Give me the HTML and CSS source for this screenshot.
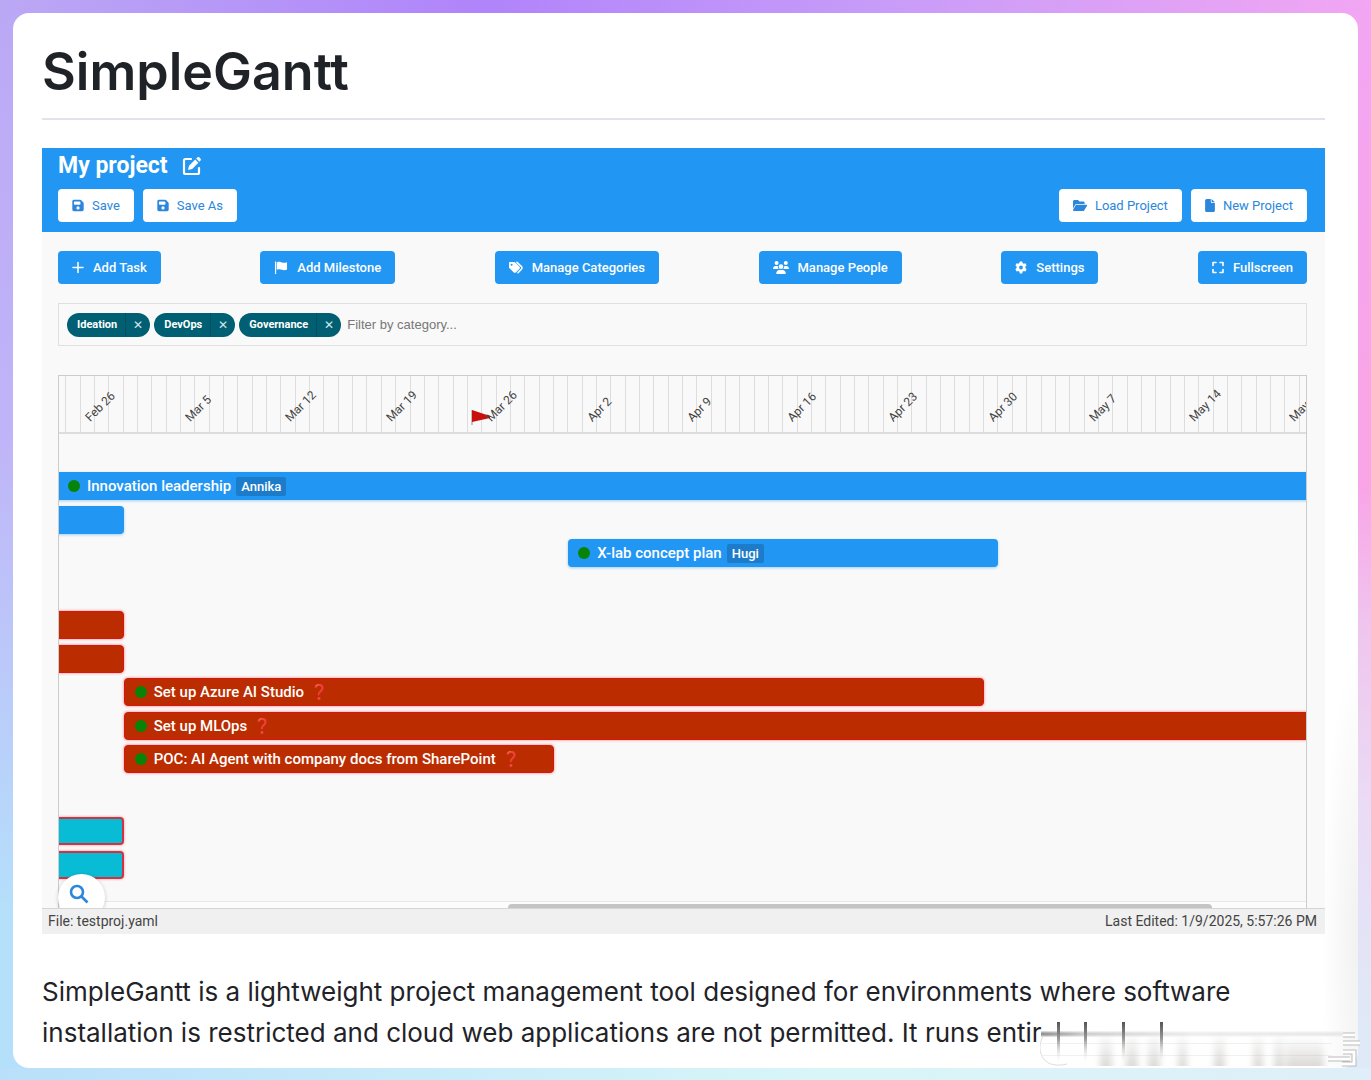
FILE: index.html
```html
<!DOCTYPE html>
<html lang="en">
<head>
<meta charset="utf-8">
<meta name="viewport" content="width=device-width, initial-scale=1">
<title>SimpleGantt</title>
<link rel="stylesheet" href="styles.css">
</head>
<body>
<main class="card">
  <h1 class="page-title">SimpleGantt</h1>

  <section class="app">
    <header class="app-header">
      <div class="project-name">
        <h2>My project</h2>
        <button class="icon-button" type="button" aria-label="Rename project">
          <svg viewBox="0 0 20 20" width="20" height="20" fill="none"><path d="M9 3H3.5A1.5 1.5 0 0 0 2 4.500v12A1.500 1.500 0 0 0 3.500 18h12a1.500 1.500 0 0 0 1.500-1.500V12" stroke="currentColor" stroke-width="2.200" stroke-linecap="round"/><path d="M6 14l1-4.200 6.200-6.200 3.200 3.200-6.200 6.200zM14.200 2.600l1-1a1.700 1.700 0 0 1 2.400 0l.8.8a1.700 1.700 0 0 1 0 2.400l-1 1z" fill="currentColor"/></svg>
        </button>
      </div>
      <div class="file-actions">
        <button class="button light" type="button"><svg viewBox="0 0 448 512" class="icon"><path d="M64 32C29 32 0 61 0 96v320c0 35 29 64 64 64h320c35 0 64-29 64-64V173c0-17-7-33-19-45l-77-77c-12-12-28-19-45-19zm0 96c0-18 14-32 32-32h192c18 0 32 14 32 32v64c0 18-14 32-32 32H96c-18 0-32-14-32-32zm160 160a64 64 0 1 1 0 128 64 64 0 1 1 0-128z"/></svg>Save</button>
        <button class="button light" type="button"><svg viewBox="0 0 448 512" class="icon"><path d="M64 32C29 32 0 61 0 96v320c0 35 29 64 64 64h320c35 0 64-29 64-64V173c0-17-7-33-19-45l-77-77c-12-12-28-19-45-19zm0 96c0-18 14-32 32-32h192c18 0 32 14 32 32v64c0 18-14 32-32 32H96c-18 0-32-14-32-32zm160 160a64 64 0 1 1 0 128 64 64 0 1 1 0-128z"/></svg>Save As</button>
        <span class="spacer"></span>
        <button class="button light" type="button"><svg viewBox="0 0 576 512" class="icon wide"><path d="M89 224 0 376V96c0-35 29-64 64-64h118c17 0 33 7 45 19l26 26c12 12 28 19 45 19h118c35 0 64 29 64 64v32H144c-23 0-44 12-55 32zm27 16c6-10 17-16 28-16h400c12 0 22 6 28 16s6 22 0 32L460 464c-6 10-16 16-28 16H32c-12 0-22-6-28-16s-6-22 0-32z"/></svg>Load Project</button>
        <button class="button light" type="button"><svg viewBox="0 0 384 512" class="icon narrow"><path d="M0 64C0 29 29 0 64 0h160v128c0 18 14 32 32 32h128v288c0 35-29 64-64 64H64c-35 0-64-29-64-64zm384 64H256V0z"/></svg>New Project</button>
      </div>
    </header>

    <div class="app-body">
      <nav class="toolbar" aria-label="Project tools">
        <button class="button" type="button"><svg viewBox="0 0 12 12" class="icon"><path d="M6 1v10M1 6h10" stroke="currentColor" stroke-width="1.500" stroke-linecap="round"/></svg>Add Task</button>
        <button class="button" type="button"><svg viewBox="0 0 14 14" class="icon wide"><path d="M.5.5h1.300V14H.5zM2.500 1.500C5 .5 6.500 1 8 1.600s3.500.6 5.500-.3v7.900c-2 .9-4 .8-5.500.3s-3-1-5.500 0z"/></svg>Add Milestone</button>
        <button class="button" type="button"><svg viewBox="0 0 14 12" class="icon wide"><path d="M0 1.500v4c0 .5.200.9.500 1.200l4.300 4.200c.6.600 1.500.6 2.100 0l3.600-3.600c.6-.6.600-1.500 0-2.100L6.300 1C6 .7 5.600.5 5.200.5H1c-.6 0-1 .4-1 1zM2.600 2.200a1 1 0 1 1 0 2 1 1 0 0 1 0-2z" fill-rule="evenodd"/><path d="M8 .8l4.200 4c.9.900.9 2 .1 2.900l-3.300 3.500" fill="none" stroke="currentColor" stroke-width="1.600" stroke-linecap="round"/></svg>Manage Categories</button>
        <button class="button" type="button"><svg viewBox="0 0 640 512" class="icon extra"><path d="M144 0a80 80 0 1 1 0 160 80 80 0 0 1 0-160zm368 0a80 80 0 1 1 0 160 80 80 0 0 1 0-160zM0 299c0-59 48-107 107-107h43c16 0 31 3 45 10-6 34 7 86 39 118H21c-12 0-21-9-21-21zm405 21h1c32-32 45-84 39-118 14-7 29-10 45-10h43c59 0 107 48 107 107 0 12-9 21-21 21zM320 128a96 96 0 1 1 0 192 96 96 0 0 1 0-192zM128 485c0-73 60-133 133-133h118c73 0 133 60 133 133 0 15-12 27-27 27H155c-15 0-27-12-27-27z"/></svg>Manage People</button>
        <button class="button" type="button"><svg viewBox="0 0 12 12" class="icon"><path d="M4.800 0h2.400l.4 1.600 1.200.7 1.600-.5 1.200 2.100-1.200 1.200v1.500l1.200 1.200-1.200 2.200-1.600-.5-1.200.7L7.200 12H4.800l-.4-1.800-1.200-.7-1.600.5L.4 7.800l1.200-1.200V5.100L.4 3.900l1.200-2.100 1.600.5 1.200-.7zM6 4.100a1.900 1.900 0 1 0 0 3.800 1.900 1.900 0 0 0 0-3.800z" fill-rule="evenodd"/></svg>Settings</button>
        <button class="button" type="button"><svg viewBox="0 0 12 12" class="icon"><path d="M1 4V1h3M8 1h3v3M11 8v3H8M4 11H1V8" fill="none" stroke="currentColor" stroke-width="1.600" stroke-linecap="round" stroke-linejoin="round"/></svg>Fullscreen</button>
      </nav>

      <div class="filter">
        <span class="chip">Ideation<button type="button" aria-label="Remove Ideation">✕</button></span>
        <span class="chip">DevOps<button type="button" aria-label="Remove DevOps">✕</button></span>
        <span class="chip">Governance<button type="button" aria-label="Remove Governance">✕</button></span>
        <input type="text" placeholder="Filter by category..." aria-label="Filter by category">
      </div>

      <div class="chart">
        <div class="days track" id="days">
          <span class="week w1">Feb 26</span>
          <span class="week w2">Mar 5</span>
          <span class="week w3">Mar 12</span>
          <span class="week w4">Mar 19</span>
          <svg class="flag" viewBox="0 0 20 16" width="20" height="16"><path d="M1 1v15" stroke="#888"/><path d="M1 1l18 6v2L1 13z" fill="#c8100c"/></svg>
          <span class="week w5">Mar 26</span>
          <span class="week w6">Apr 2</span>
          <span class="week w7">Apr 9</span>
          <span class="week w8">Apr 16</span>
          <span class="week w9">Apr 23</span>
          <span class="week w10">Apr 30</span>
          <span class="week w11">May 7</span>
          <span class="week w12">May 14</span>
          <span class="week w13">May 21</span>
        </div>

        <div class="group three">
          <div class="track"><div class="bar blue full"><i class="dot"></i>Innovation leadership<span class="person">Annika</span></div></div>
          <div class="track"><div class="bar blue early"></div></div>
          <div class="track"><div class="bar blue xlab"><i class="dot"></i>X-lab concept plan<span class="person">Hugi</span></div></div>
        </div>
        <div class="group five">
          <div class="track"><div class="bar red early"></div></div>
          <div class="track"><div class="bar red early"></div></div>
          <div class="track"><div class="bar red azure"><i class="dot"></i>Set up Azure AI Studio<span class="unknown">❓</span></div></div>
          <div class="track"><div class="bar red mlops"><i class="dot"></i>Set up MLOps<span class="unknown">❓</span></div></div>
          <div class="track"><div class="bar red poc"><i class="dot"></i>POC: AI Agent with company docs from SharePoint<span class="unknown">❓</span></div></div>
        </div>
        <div class="group two">
          <div class="track"><div class="bar cyan early"></div></div>
          <div class="track"><div class="bar cyan early"></div></div>
        </div>
        <div class="scrollbar"><div class="thumb"></div></div>
      </div>
      <button class="zoom" type="button" aria-label="Zoom"><svg viewBox="0 0 20 20" width="20" height="20" fill="none" stroke="currentColor" stroke-width="2.600"><circle cx="8" cy="8" r="6"/><path d="M12.500 12.500L18.500 18.500"/></svg></button>
    </div>

    <footer class="status"><span>File: testproj.yaml</span><span>Last Edited: 1/9/2025, 5:57:26 PM</span></footer>
  </section>

  <p class="intro">SimpleGantt is a lightweight project management tool designed for environments where software<br>installation is restricted and cloud web applications are not permitted. It runs entir</p>

  <svg class="smear" viewBox="0 0 322 46" width="322" height="46" aria-hidden="true">
    <defs>
      <linearGradient id="fade" x1="0" y1="0" x2="0" y2="1"><stop offset="0" stop-color="#555"/><stop offset=".4" stop-color="#999"/><stop offset="1" stop-color="#fff" stop-opacity="0"/></linearGradient>
      <linearGradient id="rise" x1="0" y1="0" x2="0" y2="1"><stop offset="0" stop-color="#bbb" stop-opacity="0"/><stop offset="1" stop-color="#bbb5ae" stop-opacity=".5"/></linearGradient>
      <linearGradient id="line" x1="0" y1="0" x2="1" y2="0"><stop offset="0" stop-color="#888"/><stop offset=".15" stop-color="#ccc"/><stop offset=".5" stop-color="#ececec"/><stop offset="1" stop-color="#e6e6e6"/></linearGradient>
      <filter id="soft"><feGaussianBlur stdDeviation="3 0"/></filter>
      <filter id="softline"><feGaussianBlur stdDeviation="0 1"/></filter>
    </defs>
    <path d="M1 10h302v4H1z" fill="url(#line)" filter="url(#softline)"/>
    <path d="M2 21h290v1H2zM2 33h290v1H2z" fill="#f0f0f0"/>
    <g fill="url(#rise)" filter="url(#soft)"><path d="M60 14h12v30H60zM86 14h12v30H86zM108 14h12v30h-12zM138 10h9v34h-9zM174 10h11v34h-11zM213 14h10v30h-10zM234 14h10v30h-10z"/><path d="M246 14h38v30h-38z"/></g>
    <path d="M17 0h3v42h-3zM44 0h3v42h-3zM82 0h3v42h-3zM120 0h3v42h-3z" fill="url(#fade)"/>
    <path d="M3 14c-4 8-4 16 0 22 5 8 16 8 24 6" fill="none" stroke="#ddd"/>
    <g fill="none" stroke-linejoin="miter">
      <path d="M303 13h12M303 21h17M303 30h11v12h-12M288 37h22" stroke="#bbb" stroke-width="5"/>
      <path d="M303 13h12M303 21h17M303 30h11v12h-12M288 37h22" stroke="#fff" stroke-width="3"/>
    </g>
  </svg>
</main>
<script src="app.js"></script>
</body>
</html>
```
FILE: styles.css
```css
* { box-sizing: border-box; }

body {
  margin: 0;
  padding: 13px;
  min-height: 100vh;
  color: #1f2328;
  font-family: Inter, "Liberation Sans", sans-serif;
  background:
    linear-gradient(to right, #b9dffa, #d8f6f8 60%, #dfeef8) bottom / 100% 13px no-repeat,
    linear-gradient(to right, #bba8f5, #b084fa 35%, #c89cf8 65%, #f2a6f3) top / 100% 13px no-repeat,
    linear-gradient(to bottom, #f2a6f3 0, #f9a5e8 35%, #f9a5e8 45%, #efc5ee 58%, #eadcf6 75%, #dfe9f7 95%) right / 50% 100% no-repeat,
    linear-gradient(to bottom, #bba8f5, #c0b4f8 40%, #b5e0fb 85%);
}

button, input { font: inherit; border: 0; }
button { cursor: pointer; }

.card {
  position: relative;
  padding: 29px 33px 14px 29px;
  border-radius: 16px;
  background: radial-gradient(ellipse at 100% 70%, #f1f1f1, #fff 70%) right bottom / 36px 420px no-repeat, #fff;
}

.page-title {
  margin: 0 0 28px;
  padding-bottom: 17px;
  border-bottom: 2px solid #e0e3ea;
  font-size: 52px;
  line-height: 59px;
  font-weight: 600;
}

.app {
  color: #444;
  font-family: Roboto, "Liberation Sans", sans-serif;
}

.app-header {
  padding: 4px 18px 10px 16px;
  background: #2196f3;
  color: #fff;
}

.project-name { display: flex; align-items: center; gap: 14px; }
.project-name h2 { margin: 0; font-size: 23px; line-height: 28px; font-weight: 700; }

.icon-button {
  display: flex;
  padding: 0;
  background: none;
  color: inherit;
}

.file-actions { display: flex; gap: 9px; margin-top: 9px; }
.spacer { flex: 1; }

.button {
  display: flex;
  align-items: center;
  gap: 9px;
  height: 33px;
  padding: 0 14px;
  border-radius: 4px;
  background: #2196f3;
  color: #fff;
  font-size: 13px;
  font-weight: 500;
  white-space: nowrap;
}

.button.light { gap: 8px; background: #fff; color: #2b86dc; font-weight: 400; }

.icon { width: 12px; height: 13px; fill: currentColor; }
.icon.narrow { width: 10px; }
.icon.wide { width: 14px; }
.icon.extra { width: 16px; }

.app-body {
  position: relative;
  overflow: hidden;
  padding: 19px 18px 0 16px;
  background: #f9f9f9;
}

.toolbar { display: flex; justify-content: space-between; }

.filter {
  display: flex;
  align-items: center;
  gap: 4px;
  height: 43px;
  margin: 19px 0 29px;
  padding: 0 8px;
  border: 1px solid #e0e0e0;
}

.chip {
  display: flex;
  align-items: center;
  height: 24px;
  padding-left: 10px;
  border-radius: 12px;
  background: #005f73;
  color: #fff;
  font-size: 11px;
  font-weight: 700;
}

.chip button {
  width: 25px;
  height: 24px;
  margin-left: 8px;
  padding: 0;
  border-left: 1px solid #00505f;
  background: none;
  color: #d5e5e8;
  font-size: 12px;
  font-weight: 400;
}

.filter input {
  flex: 1;
  padding: 0 2px;
  background: none;
  font-family: "Liberation Sans", sans-serif;
  font-size: 13px;
}

.filter input::placeholder { color: #777; }

.chart {
  overflow: hidden;
  border: 1px solid #ccc;
  border-bottom: 0;
}

/* One column per day; the first and last days are cut by the chart frame. */
.track {
  display: grid;
  grid-template-columns: repeat(88, minmax(0, 1fr));
  margin: 0 -8px 0 -7px;
}

.days {
  height: 58px;
  margin-bottom: 38px;
  border-bottom: 2px solid #ddd;
}

.day { grid-row: 1; border-right: 1px solid #ddd; }

.week {
  z-index: 1;
  grid-row: 1;
  align-self: end;
  margin: 0 0 7px 12px;
  font-size: 12px;
  line-height: 16px;
  white-space: nowrap;
  transform: rotate(-45deg);
  transform-origin: left bottom;
}

.w1 { grid-column: 3 / span 7; }
.w2 { grid-column: 10 / span 7; }
.w3 { grid-column: 17 / span 7; }
.w4 { grid-column: 24 / span 7; }
.w5 { grid-column: 31 / span 7; }
.w6 { grid-column: 38 / span 7; }
.w7 { grid-column: 45 / span 7; }
.w8 { grid-column: 52 / span 7; }
.w9 { grid-column: 59 / span 7; }
.w10 { grid-column: 66 / span 7; }
.w11 { grid-column: 73 / span 7; }
.w12 { grid-column: 80 / span 7; }
.w13 { grid-column: 87 / span 2; }

.flag { grid-row: 1; grid-column: 30 / span 2; align-self: end; margin: 0 0 7px 3px; z-index: 1; }

.group { display: grid; align-content: space-between; margin-bottom: 44px; }
.three { min-height: 95px; }
.five { min-height: 162px; }
.two { min-height: 62px; margin-bottom: 22px; }

.bar {
  display: flex;
  align-items: center;
  height: 28px;
  padding-left: 10px;
  border-radius: 4px;
  color: #fff;
  font-size: 15px;
  font-weight: 500;
  white-space: nowrap;
}

.blue { background: #2196f3; box-shadow: 0 1px 3px #2196f366; }
.red { background: #bb2c00; border: 1px solid #d9150f; box-shadow: 0 0 3px #ff000088; }
.cyan { background: #09bcd6; border: 2px solid #cf3444; box-shadow: 0 0 3px #ff000066; }

.full { grid-column: 1 / 89; padding-left: 16px; }
.early { grid-column: 1 / 6; }
.xlab { grid-column: 37 / 67; }
.azure { grid-column: 6 / 66; }
.mlops { grid-column: 6 / 89; }
.poc { grid-column: 6 / 36; }

.dot { width: 12px; height: 12px; margin-right: 7px; border-radius: 50%; background: #078407; }

.person {
  margin-left: 5px;
  padding: 0 5px;
  border-radius: 2px;
  background: #1d7cca;
  font-size: 13px;
  line-height: 19px;
}

.unknown { margin-left: 6px; color: #d8100c; font-family: "DejaVu Sans", sans-serif; font-size: 15px; font-weight: 400; }

.scrollbar { height: 7px; border-top: 1px solid #e8e8e8; background: #fcfcfc; }
.thumb { height: 4px; margin: 2px 94px 0 36%; border-radius: 4px 4px 0 0; background: #c4c4c4; }

.zoom {
  position: absolute;
  left: 16px;
  bottom: -13px;
  display: grid;
  place-items: center;
  width: 47px;
  height: 47px;
  padding: 0 5px 7px 0;
  border-radius: 50%;
  background: #fff;
  color: #2b86dc;
  box-shadow: 0 1px 4px #0003;
}

.status {
  display: flex;
  justify-content: space-between;
  padding: 0 8px 0 6px;
  border-top: 1px solid #d5d5d5;
  background: #f0f0f0;
  font-size: 14px;
  line-height: 25px;
}

.intro {
  margin: 37px 0 0;
  padding-bottom: 1px;
  font-size: 26px;
  line-height: 41px;
  white-space: nowrap;
}

.smear { position: absolute; right: -4px; bottom: 0; }
```
FILE: app.js
```js
// Adds the day columns behind the week labels.
const days = document.getElementById("days");
for (let day = 1; day <= 88; day++) {
  const cell = document.createElement("span");
  cell.className = "day";
  cell.style.gridColumn = day;
  days.append(cell);
}
```
